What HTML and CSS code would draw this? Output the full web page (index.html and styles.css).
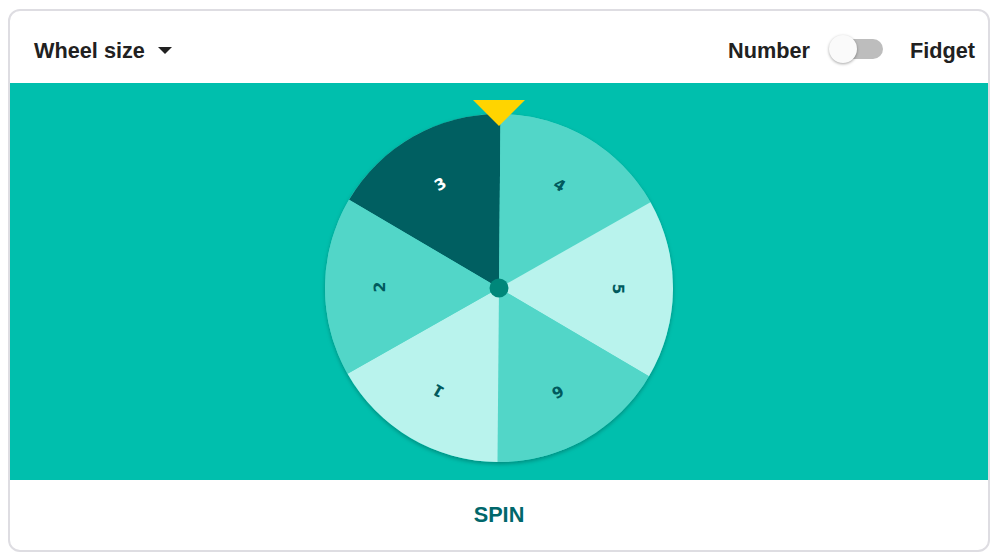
FILE: index.html
```html
<!DOCTYPE html>
<html>
<head>
<meta charset="utf-8">
<link rel="stylesheet" href="styles.css">
</head>
<body>
<div class="card">
  <div class="header">
    <div class="size-select">
      <span class="label">Wheel size</span>
      <span class="caret"></span>
    </div>
    <div class="mode">
      <span class="label">Number</span>
      <span class="toggle"><span class="track"></span><span class="thumb"></span></span>
      <span class="label fidget">Fidget</span>
    </div>
  </div>
  <div class="stage">
    <svg class="wheel" width="370" height="372" viewBox="0 0 370 372">
      <defs>
        <filter id="sh" x="-10%" y="-10%" width="120%" height="120%">
          <feDropShadow dx="0" dy="2" stdDeviation="2" flood-color="#000" flood-opacity="0.28"/>
        </filter>
      </defs>
      <g filter="url(#sh)">
        <circle cx="185" cy="188" r="174" fill="#52d6c8"/>
      </g>
      <g transform="rotate(0.5 185 188)">
        <path d="M185 188 L34.31 101 A174 174 0 0 1 185 14 Z" fill="#005f61"/>
        <path d="M185 188 L185 14 A174 174 0 0 1 335.69 101 Z" fill="#52d6c8"/>
        <path d="M185 188 L335.69 101 A174 174 0 0 1 335.69 275 Z" fill="#b9f3ed"/>
        <path d="M185 188 L335.69 275 A174 174 0 0 1 185 362 Z" fill="#52d6c8"/>
        <path d="M185 188 L185 362 A174 174 0 0 1 34.31 275 Z" fill="#b9f3ed"/>
        <path d="M185 188 L34.31 275 A174 174 0 0 1 34.31 101 Z" fill="#52d6c8"/>
        <g class="nums">
          <text x="125.5" y="84.9" transform="rotate(-30 125.5 84.9)" class="sel">3</text>
          <text x="244.5" y="84.9" transform="rotate(30 244.5 84.9)">4</text>
          <text x="304" y="188" transform="rotate(90 304 188)">5</text>
          <text x="244.5" y="291.1" transform="rotate(150 244.5 291.1)">6</text>
          <text x="125.5" y="291.1" transform="rotate(210 125.5 291.1)">1</text>
          <text x="66" y="188" transform="rotate(270 66 188)">2</text>
        </g>
      </g>
      <circle cx="185" cy="188" r="9.5" fill="#00877a"/>
      <polygon points="159,0 211,0 185,26" fill="#ffd400"/>
    </svg>
  </div>
  <div class="footer">
    <span class="spin">SPIN</span>
  </div>
</div>
</body>
</html>
```

FILE: styles.css
```css
html, body {
  margin: 0;
  padding: 0;
  background: #ffffff;
}

body {
  font-family: "Liberation Sans", Arial, sans-serif;
}

.card {
  margin: 9px 0 0 8px;
  width: 982px;
  height: 543px;
  box-sizing: border-box;
  border: 2px solid #dedde2;
  border-radius: 12px;
  overflow: hidden;
  display: flex;
  flex-direction: column;
  background: #fff;
}

.header {
  height: 72px;
  box-sizing: border-box;
  padding: 7px 13px 0 24px;
  display: flex;
  align-items: center;
  justify-content: space-between;
  flex: none;
}

.label {
  font-size: 21.7px;
  font-weight: bold;
  color: #212121;
}

.size-select {
  display: flex;
  align-items: center;
}

.caret {
  width: 0;
  height: 0;
  border-left: 7.5px solid transparent;
  border-right: 7.5px solid transparent;
  border-top: 7px solid #212121;
  margin-left: 13px;
}

.mode {
  display: flex;
  align-items: center;
}

.toggle {
  position: relative;
  width: 54px;
  height: 28px;
  margin-left: 19px;
  margin-right: 27px;
  margin-top: -4px;
}

.track {
  position: absolute;
  right: 0;
  top: 4px;
  width: 50px;
  height: 20px;
  border-radius: 10px;
  background: #bdbdbd;
}

.thumb {
  position: absolute;
  left: 0;
  top: 0;
  width: 28px;
  height: 28px;
  border-radius: 50%;
  background: #fafafa;
  box-shadow: 0 1px 3px rgba(0, 0, 0, 0.35);
}

.stage {
  height: 397px;
  flex: none;
  background: #00bfad;
  display: flex;
  justify-content: center;
  align-items: flex-start;
  padding-top: 17px;
  box-sizing: border-box;
}

.wheel {
  display: block;
}

.nums text {
  font-family: "DejaVu Sans", "Liberation Sans", sans-serif;
  font-weight: bold;
  font-size: 15.5px;
  fill: #005a5d;
  text-anchor: middle;
  dominant-baseline: central;
}

.nums text.sel {
  fill: #ffffff;
}

.footer {
  flex: 1;
  display: flex;
  align-items: center;
  justify-content: center;
}

.spin {
  font-size: 21.7px;
  font-weight: bold;
  color: #00676b;
}
```
